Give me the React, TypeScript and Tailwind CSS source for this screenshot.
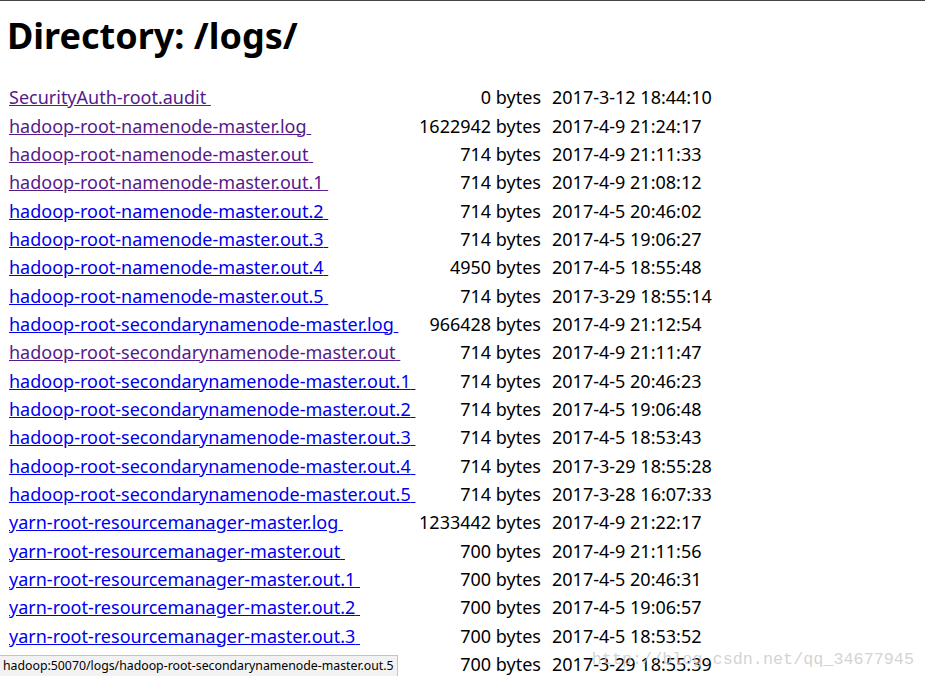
import React from 'react';

type Entry = {
  name: string;
  size: string;
  date: string;
  visited?: boolean;
};

const entries: Entry[] = [
  { name: 'SecurityAuth-root.audit', size: '0 bytes', date: '2017-3-12 18:44:10', visited: true },
  { name: 'hadoop-root-namenode-master.log', size: '1622942 bytes', date: '2017-4-9 21:24:17', visited: true },
  { name: 'hadoop-root-namenode-master.out', size: '714 bytes', date: '2017-4-9 21:11:33', visited: true },
  { name: 'hadoop-root-namenode-master.out.1', size: '714 bytes', date: '2017-4-9 21:08:12', visited: true },
  { name: 'hadoop-root-namenode-master.out.2', size: '714 bytes', date: '2017-4-5 20:46:02' },
  { name: 'hadoop-root-namenode-master.out.3', size: '714 bytes', date: '2017-4-5 19:06:27' },
  { name: 'hadoop-root-namenode-master.out.4', size: '4950 bytes', date: '2017-4-5 18:55:48' },
  { name: 'hadoop-root-namenode-master.out.5', size: '714 bytes', date: '2017-3-29 18:55:14' },
  { name: 'hadoop-root-secondarynamenode-master.log', size: '966428 bytes', date: '2017-4-9 21:12:54' },
  { name: 'hadoop-root-secondarynamenode-master.out', size: '714 bytes', date: '2017-4-9 21:11:47', visited: true },
  { name: 'hadoop-root-secondarynamenode-master.out.1', size: '714 bytes', date: '2017-4-5 20:46:23' },
  { name: 'hadoop-root-secondarynamenode-master.out.2', size: '714 bytes', date: '2017-4-5 19:06:48' },
  { name: 'hadoop-root-secondarynamenode-master.out.3', size: '714 bytes', date: '2017-4-5 18:53:43' },
  { name: 'hadoop-root-secondarynamenode-master.out.4', size: '714 bytes', date: '2017-3-29 18:55:28' },
  { name: 'hadoop-root-secondarynamenode-master.out.5', size: '714 bytes', date: '2017-3-28 16:07:33' },
  { name: 'yarn-root-resourcemanager-master.log', size: '1233442 bytes', date: '2017-4-9 21:22:17' },
  { name: 'yarn-root-resourcemanager-master.out', size: '700 bytes', date: '2017-4-9 21:11:56' },
  { name: 'yarn-root-resourcemanager-master.out.1', size: '700 bytes', date: '2017-4-5 20:46:31' },
  { name: 'yarn-root-resourcemanager-master.out.2', size: '700 bytes', date: '2017-4-5 19:06:57' },
  { name: 'yarn-root-resourcemanager-master.out.3', size: '700 bytes', date: '2017-4-5 18:53:52' },
  { name: 'yarn-root-resourcemanager-master.out.4', size: '700 bytes', date: '2017-3-29 18:55:39' },
];

export default function App() {
  return (
    <div className="relative h-[676px] w-[925px] overflow-hidden bg-white border-t border-[#444] font-['Noto_Sans',sans-serif] text-black">
      <h1 className="pl-[7px] pt-[10px] text-[36px] font-bold leading-[50px]">Directory: /logs/</h1>

      <div className="mt-[22px] flex flex-col">
        {entries.map((e) => (
          <div key={e.name} className="flex h-[28.35px] items-center whitespace-nowrap text-[18px] leading-[28px]">
            <div className="ml-[9px] w-[410px] shrink-0">
              <a href="#" className={`underline ${e.visited ? 'text-[#551a8b]' : 'text-[#0000ee]'}`}>
                {e.name}{'\u00a0'}
              </a>
            </div>
            <span className="w-[122px] shrink-0 text-right">{e.size}</span>
            <span className="ml-[11px]">{e.date}</span>
          </div>
        ))}
      </div>

      <div className="pointer-events-none absolute right-[11px] top-[646px] font-['Liberation_Mono',monospace] text-[16.8px] text-[#c8c8c8]/80">
        http://blog.csdn.net/qq_34677945
      </div>

      <div className="absolute bottom-0 left-0 h-[21px] w-[398px] whitespace-nowrap border-t border-r border-[#c4c4c4] bg-[#f2f2f2] pl-[3px] text-[12.3px] leading-[20px] text-black">
        hadoop:50070/logs/hadoop-root-secondarynamenode-master.out.5
      </div>
    </div>
  );
}
